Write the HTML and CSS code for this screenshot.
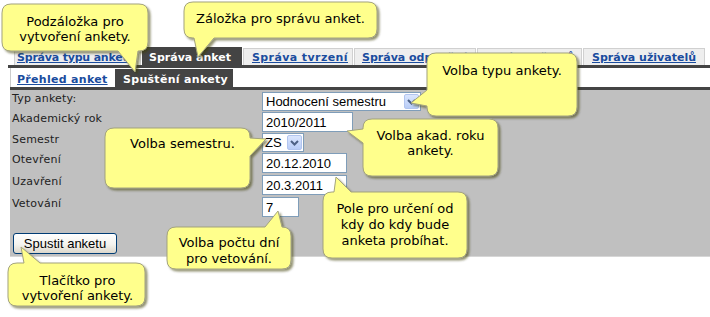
FILE: index.html
```html
<!DOCTYPE html>
<html lang="cs">
<head>
<meta charset="utf-8">
<title>Spuštění ankety</title>
<link rel="stylesheet" href="styles.css">
</head>
<body>
<div class="page">
  <nav class="tabs">
    <a class="tab t1" href="#">Správa typu ankety</a>
    <span class="tab t2 active">Správa anket</span>
    <a class="tab t3" href="#">Správa tvrzení</a>
    <a class="tab t4" href="#">Správa odpovědí</a>
    <a class="tab t5" href="#">Správa učitelů</a>
    <a class="tab t6" href="#">Správa uživatelů</a>
  </nav>
  <nav class="subtabs">
    <a class="subtab s1" href="#">Přehled anket</a>
    <span class="subtab s2 active">Spuštění ankety</span>
  </nav>
  <form class="form">
    <div class="grid">
      <label class="lbl">Typ ankety:</label>
      <div class="select w-type"><span class="sel-text">Hodnocení semestru</span><span class="arrow"><svg width="9" height="6" viewBox="0 0 9 6"><path d="M1 1 L4.5 4.5 L8 1" fill="none" stroke="#4d6185" stroke-width="2"/></svg></span></div>
      <label class="lbl">Akademický rok</label>
      <input class="inp w-year" type="text" value="2010/2011">
      <label class="lbl">Semestr</label>
      <div class="select w-sem"><span class="sel-text">ZS</span><span class="arrow"><svg width="9" height="6" viewBox="0 0 9 6"><path d="M1 1 L4.5 4.5 L8 1" fill="none" stroke="#4d6185" stroke-width="2"/></svg></span></div>
      <label class="lbl">Otevření</label>
      <input class="inp w-date" type="text" value="20.12.2010">
      <label class="lbl">Uzavření</label>
      <input class="inp w-date" type="text" value="20.3.2011">
      <label class="lbl">Vetování</label>
      <input class="inp w-num" type="text" value="7">
    </div>
    <button class="btn" type="button">Spustit anketu</button>
  </form>
</div>

<svg class="bubbles" width="710" height="317" viewBox="0 0 710 317">
  <defs>
    <filter id="sh" x="-20%" y="-20%" width="140%" height="150%">
      <feDropShadow dx="2" dy="2" stdDeviation="1.2" flood-color="#3a3a00" flood-opacity="0.55"/>
    </filter>
  </defs>
  <g class="bub" filter="url(#sh)">
    <path d="M11,4 H139 Q148,4 148,13 V42 Q148,51 139,51 H138 L135,72 L118,51 H11 Q2,51 2,42 V13 Q2,4 11,4 Z"/>
    <path d="M193,2 H368 Q377,2 377,11 V29 Q377,38 368,38 H214 L198,57 L194,38 H193 Q184,38 184,29 V11 Q184,2 193,2 Z"/>
    <path d="M436,53 H568 Q577,53 577,62 V107 Q577,116 568,116 H436 Q427,116 427,107 V106 L411,103 L427,90 V62 Q427,53 436,53 Z"/>
    <path d="M372,119 H489 Q498,119 498,128 V167 Q498,176 489,176 H372 Q363,176 363,167 V143 L347,131 L363,129 V128 Q363,119 372,119 Z"/>
    <path d="M114,128 H241 Q250,128 250,137 V138 L266,139 L250,156 V179 Q250,188 241,188 H114 Q105,188 105,179 V137 Q105,128 114,128 Z"/>
    <path d="M332,192 H334 L336,177 L351,192 H458 Q467,192 467,201 V249 Q467,258 458,258 H332 Q323,258 323,249 V201 Q323,192 332,192 Z"/>
    <path d="M176,227 H265 L278,211 L282,227 Q291,227 291,236 V260 Q291,269 282,269 H176 Q167,269 167,260 V236 Q167,227 176,227 Z"/>
    <path d="M17,263 H24 L21,247 L40,263 H136 Q145,263 145,272 V297 Q145,306 136,306 H17 Q8,306 8,297 V272 Q8,263 17,263 Z"/>
  </g>
</svg>

<div class="note n1">Podzáložka pro<br>vytvoření ankety.</div>
<div class="note n2">Záložka pro správu anket.</div>
<div class="note n3">Volba typu ankety.</div>
<div class="note n4">Volba akad. roku<br>ankety.</div>
<div class="note n5">Volba semestru.</div>
<div class="note n6">Pole pro určení od<br>kdy do kdy bude<br>anketa probíhat.</div>
<div class="note n7">Volba počtu dní<br>pro vetování.</div>
<div class="note n8">Tlačítko pro<br>vytvoření ankety.</div>
</body>
</html>
```

FILE: styles.css
```css
html, body {
  margin: 0;
  padding: 0;
  background: #ffffff;
}
body {
  width: 710px;
  height: 317px;
  overflow: hidden;
  position: relative;
  font-family: "DejaVu Sans", Verdana, sans-serif;
}
.page {
  padding: 47px 0 0 8px;
}

/* main tabs */
.tabs {
  display: flex;
  gap: 1px;
  height: 18px;
  padding-left: 6px;
  border-bottom: 3px solid #444444;
}
.tab {
  box-sizing: border-box;
  flex: none;
  margin-top: 1px;
  padding: 2px 0 0 7px;
  border: 1px solid #d0d0d0;
  border-bottom: 0;
  background: #eeeeee;
  color: #1a4c9e;
  font-size: 11px;
  font-weight: bold;
  line-height: 13px;
  white-space: nowrap;
  overflow: hidden;
  text-decoration: underline;
}
.tab.active {
  margin-top: 0;
  padding-top: 3px;
  border-color: #444444;
  background: #444444;
  color: #ffffff;
  text-decoration: none;
}
.t1 { width: 127px; padding-left: 2px; letter-spacing: -0.2px; }
.t2 { width: 100px; padding-left: 6px; }
.t3 { width: 110px; padding-left: 8px; letter-spacing: 0.4px; }
.t4 { width: 122px; }
.t5 { width: 105px; }
.t6 { width: 122px; padding-left: 8px; }

/* sub tabs */
.subtabs {
  display: flex;
  gap: 1px;
  height: 19px;
  margin-left: 2px;
  border-bottom: 3px solid #444444;
}
.subtab {
  box-sizing: border-box;
  flex: none;
  padding: 5px 0 0 6px;
  border-left: 1px solid #cccccc;
  background: #ffffff;
  color: #1a4c9e;
  font-size: 11px;
  font-weight: bold;
  line-height: 13px;
  white-space: nowrap;
  text-decoration: underline;
}
.subtab.active {
  margin-top: 1px;
  padding: 4px 0 0 8px;
  border-left: 0;
  background: #444444;
  color: #ffffff;
  text-decoration: none;
}
.s1 { width: 104px; letter-spacing: 0.3px; }
.s2 { width: 118px; letter-spacing: 0.3px; }

/* form */
.form {
  box-sizing: border-box;
  height: 167px;
  margin: 0 0 0 2px;
  padding: 2px 0 3px 2px;
  background: #c0c0c0;
  border-bottom: 1px solid #d6d6d6;
}
.grid {
  display: grid;
  grid-template-columns: 250px auto;
  grid-template-rows: 20px 21px 20px 22px 22px 21px;
  align-items: start;
  justify-items: start;
}
.lbl {
  font-size: 11px;
  line-height: 13px;
  color: #222222;
  letter-spacing: 0.2px;
}
.inp {
  box-sizing: border-box;
  height: 20px;
  margin: 0;
  padding: 0 3px;
  border: 1px solid #7f9db9;
  background: #ffffff;
  color: #000000;
  font-family: "Liberation Sans", Arial, sans-serif;
  font-size: 13px;
  outline: none;
}
.w-year { width: 91px; }
.w-date { width: 85px; }
.w-num { width: 37px; }

.select {
  box-sizing: border-box;
  display: flex;
  align-items: center;
  justify-content: space-between;
  height: 19px;
  padding-left: 3px;
  border: 1px solid #7f9db9;
  background: #ffffff;
  font-family: "Liberation Sans", Arial, sans-serif;
  font-size: 13px;
  color: #000000;
}
.w-type { width: 159px; }
.w-sem { width: 42px; padding-left: 2px; }
.sel-text {
  white-space: nowrap;
  line-height: 15px;
}
.arrow {
  box-sizing: border-box;
  display: flex;
  align-items: center;
  justify-content: center;
  width: 15px;
  height: 15px;
  margin-right: 1px;
  border: 1px solid #b2c5ef;
  border-radius: 2px;
  background: linear-gradient(#dbe6fe, #b9cdf7);
}

.btn {
  box-sizing: border-box;
  display: block;
  width: 104px;
  height: 21px;
  margin: 15px 0 0 1px;
  padding: 0;
  border: 1px solid #003c74;
  border-radius: 3px;
  background: linear-gradient(#ffffff, #f4f3ee 55%, #dcd7cb);
  color: #000000;
  font-family: "Liberation Sans", Arial, sans-serif;
  font-size: 13px;
}

/* callouts */
.bubbles {
  position: absolute;
  left: 0;
  top: 0;
  z-index: 5;
  pointer-events: none;
}
.bub path {
  fill: #ffff8c;
  stroke: #a3a37c;
  stroke-width: 1;
}
.note {
  position: absolute;
  z-index: 6;
  font-family: "DejaVu Sans", Verdana, sans-serif;
  font-size: 13px;
  line-height: 15px;
  text-align: center;
  color: #000000;
  white-space: nowrap;
}
.n1 { left: 2px; top: 14px; width: 146px; }
.n2 { left: 184px; top: 11px; width: 193px; }
.n3 { left: 427px; top: 63px; width: 150px; }
.n4 { left: 363px; top: 128px; width: 135px; }
.n5 { left: 110px; top: 136px; width: 145px; }
.n6 { left: 323px; top: 201px; width: 144px; line-height: 16px; }
.n7 { left: 167px; top: 235px; width: 124px; line-height: 16px; }
.n8 { left: 9px; top: 273px; width: 137px; }
```
